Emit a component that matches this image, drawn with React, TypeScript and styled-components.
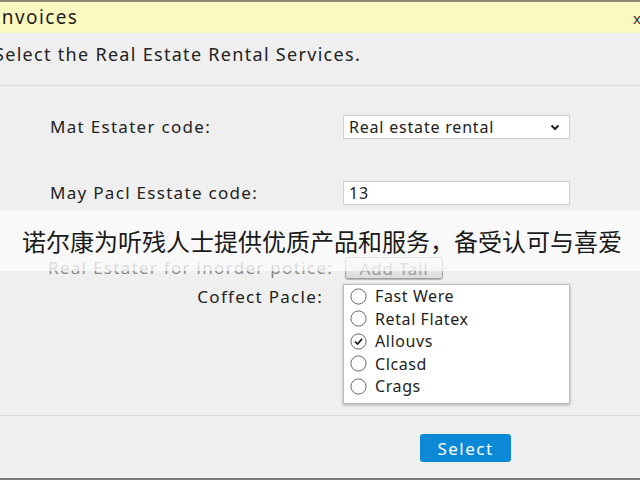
import styled, { createGlobalStyle } from 'styled-components';

const GlobalStyle = createGlobalStyle`
  html, body {
    margin: 0;
    padding: 0;
    background: #efefef;
    overflow: hidden;
  }
  body {
    font-family: 'Noto Sans', 'Open Sans', sans-serif;
    color: #222;
  }
`;

const options = ['Fast Were', 'Retal Flatex', 'Allouvs', 'Clcasd', 'Crags'];

const Chevron = () => (
  <svg width='10' height='7' viewBox='0 0 10 7'>
    <path d='M1.5 1.5 L5 5 L8.5 1.5' fill='none' stroke='#222' strokeWidth='2' />
  </svg>
);

const RadioMark = ({ checked }: { checked: boolean }) => (
  <svg width='17' height='17' viewBox='0 0 17 17'>
    <circle cx='8.5' cy='8.5' r='7.6' fill='#fff' stroke='#666' strokeWidth='1' />
    {checked && (
      <path
        d='M5 8.6 L7.6 11 L12 5.8'
        fill='none'
        stroke='#222'
        strokeWidth='1.8'
      />
    )}
  </svg>
);

export default function App() {
  return (
    <>
      <GlobalStyle />
      <Window>
        <TitleBar>
          <TitleText>Invoices</TitleText>
          <Close>x</Close>
        </TitleBar>
        <Header>Select the Real Estate Rental Services.</Header>
        <Form>
          <Field $top={29}>
            <Label>Mat Estater code:</Label>
            <SelectBox>
              <span>Real estate rental</span>
              <Chevron />
            </SelectBox>
          </Field>
          <Field $top={42}>
            <Label>May Pacl Esstate code:</Label>
            <TextBox>13</TextBox>
          </Field>
          <Field $top={51}>
            <Label $muted>Real Estater for inorder potice:</Label>
            <GreyButton>Add Tall</GreyButton>
          </Field>
          <Field $top={4} $start>
            <Label $right>Coffect Pacle:</Label>
            <ListBox>
              {options.map((o) => (
                <Option key={o}>
                  <RadioMark checked={o === 'Allouvs'} />
                  <span>{o}</span>
                </Option>
              ))}
            </ListBox>
          </Field>
        </Form>
        <Footer>
          <PrimaryButton>Select</PrimaryButton>
        </Footer>
      </Window>
      <Caption>诺尔康为听残人士提供优质产品和服务，备受认可与喜爱</Caption>
    </>
  );
}

const Window = styled.div`
  width: 654px;
  height: 480px;
  margin-left: -6px;
  display: flex;
  flex-direction: column;
  box-sizing: border-box;
  border-bottom: 2px solid #7a7a7a;
`;

const TitleBar = styled.div`
  height: 33px;
  box-sizing: border-box;
  border-top: 2px solid #8c8a78;
  background: #fcf9c0;
  display: flex;
  align-items: center;
  justify-content: space-between;
  padding-right: 7px;
`;

const TitleText = styled.span`
  font-size: 19px;
  letter-spacing: 1.4px;
  color: #1e1e1e;
  margin-top: -2px;
`;

const Close = styled.span`
  font-size: 15px;
  color: #333;
`;

const Header = styled.div`
  height: 53px;
  box-sizing: border-box;
  border-bottom: 1px solid #dcdcdc;
  font-size: 18px;
  letter-spacing: 1.3px;
  display: flex;
  align-items: center;
  padding-bottom: 10px;
`;

const Form = styled.div`
  flex: 1;
  padding-left: 56px;
  display: flex;
  flex-direction: column;
`;

const Field = styled.div<{ $top: number; $start?: boolean }>`
  display: grid;
  grid-template-columns: 293px 227px;
  align-items: ${(p) => (p.$start ? 'start' : 'center')};
  margin-top: ${(p) => p.$top}px;
`;

const Label = styled.span<{ $muted?: boolean; $right?: boolean }>`
  font-size: 17px;
  letter-spacing: 1.3px;
  white-space: nowrap;
  color: ${(p) => (p.$muted ? '#8a8a8a' : '#222')};
  text-align: ${(p) => (p.$right ? 'right' : 'left')};
  padding-right: ${(p) => (p.$right ? '20px' : '0')};
  margin-left: ${(p) => (p.$muted ? '-2px' : '0')};
  line-height: 24px;
  margin-top: ${(p) => (p.$right ? '1px' : '0')};
`;

const SelectBox = styled.div`
  height: 24px;
  box-sizing: border-box;
  background: #fff;
  border: 1px solid #cfcfcf;
  display: flex;
  align-items: center;
  justify-content: space-between;
  padding: 0 9px 0 5px;
  font-size: 16px;
  letter-spacing: 0.8px;
`;

const TextBox = styled.div`
  height: 24px;
  box-sizing: border-box;
  background: #fff;
  border: 1px solid #cfcfcf;
  display: flex;
  align-items: center;
  padding: 0 5px;
  font-size: 16px;
  letter-spacing: 0.8px;
`;

const GreyButton = styled.div`
  width: 98px;
  height: 22px;
  margin-left: 2px;
  box-sizing: border-box;
  border: 1px solid #a0a0a0;
  border-radius: 3px;
  background: linear-gradient(#f4f4f4, #dcdcdc);
  box-shadow: 0 1px 1px rgba(0, 0, 0, 0.25);
  color: #9c9c9c;
  font-size: 17px;
  letter-spacing: 0.8px;
  display: flex;
  align-items: center;
  justify-content: center;
`;

const ListBox = styled.div`
  height: 120px;
  box-sizing: border-box;
  background: #fff;
  border: 1px solid #bdbdbd;
  box-shadow: 0 1px 3px rgba(0, 0, 0, 0.3);
  padding: 0 0 0 6px;
`;

const Option = styled.div`
  height: 22.5px;
  display: flex;
  align-items: center;
  gap: 8px;
  font-size: 16px;
  letter-spacing: 0.6px;
  color: #1e1e1e;
`;

const Footer = styled.div`
  height: 63px;
  box-sizing: border-box;
  border-top: 1px solid #d9d9d9;
  padding: 18px 0 0 426px;
`;

const PrimaryButton = styled.div`
  width: 91px;
  height: 28px;
  border-radius: 3px;
  background: #0b89d6;
  color: #fff;
  font-size: 17px;
  letter-spacing: 1.5px;
  display: flex;
  align-items: center;
  justify-content: center;
`;

const Caption = styled.div`
  position: absolute;
  left: 0;
  right: 0;
  top: 210px;
  height: 61px;
  background: rgba(252, 252, 252, 0.72);
  display: flex;
  align-items: center;
  padding-left: 22px;
  font-family: 'Noto Sans CJK SC', sans-serif;
  font-size: 24px;
  color: #1a1a1a;
`;
